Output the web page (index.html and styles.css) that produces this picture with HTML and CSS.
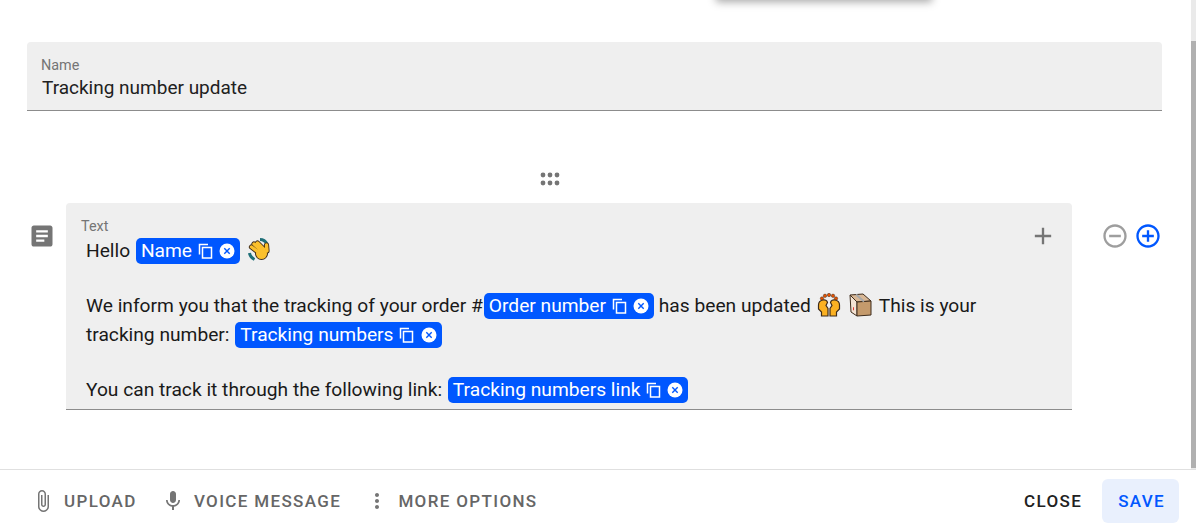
FILE: index.html
```html
<!DOCTYPE html>
<html lang="en">
<head>
  <meta charset="UTF-8" />
  <title>Tracking number update</title>
  <link rel="stylesheet" href="styles.css">
</head>
<body>

<div class="dialog">
  <div class="menu-shadow"></div>

  <div class="content">
    <!-- Name field -->
    <div class="name-field">
      <div class="field-label">Name</div>
      <div class="field-value">Tracking number update</div>
    </div>

    <div class="drag-handle">
      <svg width="20" height="14" viewBox="0 0 20 14"><g fill="#757575"><circle cx="3" cy="3" r="2.400"/><circle cx="10" cy="3" r="2.400"/><circle cx="17" cy="3" r="2.400"/><circle cx="3" cy="11" r="2.400"/><circle cx="10" cy="11" r="2.400"/><circle cx="17" cy="11" r="2.400"/></g></svg>
    </div>

    <!-- Message block -->
    <div class="message-row">
      <svg class="block-icon" width="28" height="28" viewBox="0 0 24 24"><path fill="#757575" d="M19 3H5c-1.100 0-2 .9-2 2v14c0 1.100.9 2 2 2h14c1.100 0 2-.9 2-2V5c0-1.100-.9-2-2-2zm-5 14H7v-2h7v2zm3-4H7v-2h10v2zm0-4H7V7h10v2z"/></svg>

      <div class="text-field">
        <div class="text-label">Text</div>
        <svg class="add-icon" width="28" height="28" viewBox="0 0 24 24"><path fill="#757575" d="M19 13h-6v6h-2v-6H5v-2h6V5h2v6h6v2z"/></svg>
        <div class="text-body">
          <p>Hello <span class="chip">Name
            <svg class="chip-copy" viewBox="0 0 16 16"><path d="M1.500 11.500V1.500H10M4.500 4.500H13.500V15H4.500z"/></svg>
            <svg class="chip-close" viewBox="0 0 16 16"><circle cx="8" cy="8" r="7.500" fill="#fff"/><path d="M5.300 5.300l5.400 5.400M10.700 5.300l-5.400 5.400" stroke="#0057ff" stroke-width="1.400"/></svg>
          </span> <svg class="emoji emoji-wave" viewBox="0 0 24 24">
            <path d="M13 1.500c3 0 5.500 1.500 7 4.500M2.500 15c.5 3 2 5 5 6.500" fill="none" stroke="#1f6f78" stroke-width="3"/>
            <g fill="none" stroke="#3e2c1c" stroke-width="5.200" stroke-linecap="round"><path d="M4.500 9l8 6M7 6l8 7M10.500 5l6 6M19.500 7l.5 6"/></g>
            <circle cx="14.500" cy="15.500" r="6.500" fill="#3e2c1c"/>
            <g fill="none" stroke="#fbc02d" stroke-width="3.400" stroke-linecap="round"><path d="M4.500 9l8 6M7 6l8 7M10.500 5l6 6M19.500 7l.5 6"/></g>
            <circle cx="14.500" cy="15.500" r="5.500" fill="#fbc02d"/>
          </svg></p>
          <p class="gap">We inform you that the tracking of your order #<span class="chip">Order number
            <svg class="chip-copy" viewBox="0 0 16 16"><path d="M1.500 11.500V1.500H10M4.500 4.500H13.500V15H4.500z"/></svg>
            <svg class="chip-close" viewBox="0 0 16 16"><circle cx="8" cy="8" r="7.500" fill="#fff"/><path d="M5.300 5.300l5.400 5.400M10.700 5.300l-5.400 5.400" stroke="#0057ff" stroke-width="1.400"/></svg>
          </span> has been updated <svg class="emoji" viewBox="0 0 24 24">
            <g fill="#e65100" stroke="#3e2c1c" stroke-width=".5"><circle cx="5" cy="5.500" r="1.700"/><circle cx="8" cy="2.800" r="1.700"/><circle cx="12" cy="2" r="1.700"/><circle cx="16" cy="2.800" r="1.700"/><circle cx="19" cy="5.500" r="1.700"/></g>
            <path fill="#fbb122" stroke="#3e2c1c" stroke-width="1.200" d="M6 7c2-.5 4 .5 4.500 2.500L9 12.500l2 3V23H4.500v-4L1.500 16v-4c0-3 1.500-4.500 4.500-5zM18 7c-2-.5-4 .5-4.500 2.500l1.500 3-2 3V23h6.500v-4l3-3v-4c0-3-1.500-4.500-4.500-5z"/>
          </svg> <svg class="emoji emoji-box" viewBox="0 0 24 24">
            <path fill="#d9b896" stroke="#3e2c1c" d="M2 2l13-1 8 7-14 1z"/>
            <path fill="#f3e3d3" stroke="#3e2c1c" d="M2 2l7 7v14l-6-4z"/>
            <path fill="#c49a6c" stroke="#3e2c1c" d="M9 9l14-1v14l-14 1z"/>
            <path d="M8 1.600l8 7" stroke="#a9a9a9" stroke-width="2"/>
            <path d="M5 14l1 .5v3l-1-.5z" fill="#e53935"/>
          </svg> This is your tracking number: <span class="chip">Tracking numbers
            <svg class="chip-copy" viewBox="0 0 16 16"><path d="M1.500 11.500V1.500H10M4.500 4.500H13.500V15H4.500z"/></svg>
            <svg class="chip-close" viewBox="0 0 16 16"><circle cx="8" cy="8" r="7.500" fill="#fff"/><path d="M5.300 5.300l5.400 5.400M10.700 5.300l-5.400 5.400" stroke="#0057ff" stroke-width="1.400"/></svg>
          </span></p>
          <p class="gap">You can track it through the following link: <span class="chip">Tracking numbers link
            <svg class="chip-copy" viewBox="0 0 16 16"><path d="M1.500 11.500V1.500H10M4.500 4.500H13.500V15H4.500z"/></svg>
            <svg class="chip-close" viewBox="0 0 16 16"><circle cx="8" cy="8" r="7.500" fill="#fff"/><path d="M5.300 5.300l5.400 5.400M10.700 5.300l-5.400 5.400" stroke="#0057ff" stroke-width="1.400"/></svg>
          </span></p>
        </div>
      </div>

      <div class="row-actions">
        <svg width="28" height="28" viewBox="0 0 24 24"><path fill="#9e9e9e" d="M7 11v2h10v-2H7zm5-9C6.480 2 2 6.480 2 12s4.480 10 10 10 10-4.480 10-10S17.520 2 12 2zm0 18c-4.410 0-8-3.590-8-8s3.590-8 8-8 8 3.590 8 8-3.590 8-8 8z"/></svg>
        <svg width="28" height="28" viewBox="0 0 24 24"><path fill="#0057ff" d="M13 7h-2v4H7v2h4v4h2v-4h4v-2h-4V7zm-1-5C6.480 2 2 6.480 2 12s4.480 10 10 10 10-4.480 10-10S17.520 2 12 2zm0 18c-4.410 0-8-3.590-8-8s3.590-8 8-8 8 3.590 8 8-3.590 8-8 8z"/></svg>
      </div>
    </div>
  </div>

  <div class="scrollbar"><div class="scrollbar-thumb"></div></div>

  <!-- Footer -->
  <div class="footer">
    <div class="footer-left">
      <button class="btn">
        <svg width="24" height="24" viewBox="0 0 24 24"><path fill="#757575" d="M16.500 6v11.500c0 2.210-1.790 4-4 4s-4-1.790-4-4V5c0-1.380 1.120-2.500 2.500-2.500s2.500 1.120 2.500 2.500v10.500c0 .55-.45 1-1 1s-1-.45-1-1V6H10v9.500c0 1.380 1.120 2.500 2.500 2.500s2.500-1.120 2.500-2.500V5c0-2.210-1.790-4-4-4S7 2.790 7 5v12.500c0 3.040 2.460 5.500 5.500 5.500s5.500-2.460 5.500-5.500V6h-1.500z"/></svg>
        Upload
      </button>
      <button class="btn">
        <svg width="24" height="24" viewBox="0 0 24 24"><path fill="#757575" d="M12 14c1.660 0 2.990-1.340 2.990-3L15 5c0-1.660-1.340-3-3-3S9 3.340 9 5v6c0 1.660 1.340 3 3 3zm5.300-3c0 3-2.540 5.100-5.300 5.100S6.700 14 6.700 11H5c0 3.410 2.720 6.230 6 6.720V21h2v-3.280c3.280-.48 6-3.300 6-6.720h-1.700z"/></svg>
        Voice message
      </button>
      <button class="btn">
        <svg width="24" height="24" viewBox="0 0 24 24"><path fill="#757575" d="M12 8c1.100 0 2-.9 2-2s-.9-2-2-2-2 .9-2 2 .9 2 2 2zm0 2c-1.100 0-2 .9-2 2s.9 2 2 2 2-.9 2-2-.9-2-2-2zm0 6c-1.100 0-2 .9-2 2s.9 2 2 2 2-.9 2-2-.9-2-2-2z"/></svg>
        More options
      </button>
    </div>
    <div class="footer-right">
      <button class="btn btn-close">Close</button>
      <button class="btn btn-save">Save</button>
    </div>
  </div>
</div>

</body>
</html>
```

FILE: styles.css
```css
* { box-sizing: border-box; }

body, html {
  margin: 0;
  padding: 0;
  height: 100%;
  overflow: hidden;
  background: white;
  font-family: Roboto, sans-serif;
}

.dialog {
  position: relative;
  display: flex;
  flex-direction: column;
  height: 532px;
}

.menu-shadow {
  position: absolute;
  top: -20px;
  left: 716px;
  width: 216px;
  height: 20px;
  background: white;
  box-shadow: 0 2px 8px 0 rgba(0,0,0,0.35);
}

.content {
  flex: 1;
  padding: 42px 34px 0 27px;
}

.name-field {
  height: 69px;
  padding: 15px 14px 0 15px;
  background-color: #efefef;
  border-bottom: 1px solid #8c8c8c;
  border-radius: 4px 4px 0 0;
}

.field-label {
  margin-left: -1px;
  font-size: 14.400px;
  line-height: 18px;
  color: #757575;
}

.field-value {
  font-size: 19px;
  line-height: 26px;
  color: #212121;
}

.drag-handle {
  display: flex;
  justify-content: center;
  height: 92px;
  padding-top: 61px;
  padding-right: 89px;
}

.message-row {
  display: flex;
  align-items: flex-start;
}

.block-icon {
  flex: none;
  margin: 19px 10px 0 1px;
}

.text-field {
  position: relative;
  width: 1006px;
  height: 207px;
  padding: 15px 15px 0;
  background-color: #efefef;
  border-bottom: 1px solid #8c8c8c;
  border-radius: 4px 4px 0 0;
}

.text-label {
  font-size: 14.400px;
  line-height: 17px;
  color: #757575;
}

.add-icon {
  position: absolute;
  top: 19px;
  right: 15px;
}

.text-body {
  padding: 1px 0 0 5px;
  width: 915px;
  font-size: 19.200px;
  line-height: 29px;
  color: #1a1a1a;
}

.text-body p { margin: 0; }
.text-body .gap { margin-top: 26px; }

.chip {
  display: inline-flex;
  align-items: center;
  gap: 5.500px;
  height: 26px;
  margin-left: 1px;
  padding: 0 5px;
  background-color: #0057ff;
  color: white;
  border-radius: 5px;
  line-height: 26px;
}

.chip-copy {
  width: 16px;
  height: 16px;
  fill: none;
  stroke: white;
  stroke-width: 1.500;
}

.chip-close {
  width: 16px;
  height: 16px;
}

.emoji {
  width: 24px;
  height: 24px;
  margin-left: 1px;
  vertical-align: -5px;
}

.emoji-wave { margin-left: 2px; }
.emoji-box { margin: 0 2px 0 3px; }

.row-actions {
  display: flex;
  gap: 5px;
  margin: 19px 0 0 29px;
}

.scrollbar {
  position: absolute;
  top: 0;
  right: 0;
  width: 5px;
  height: 469px;
  background-color: #eaeaea;
}

.scrollbar-thumb {
  height: 427px;
  margin-top: 41px;
  background-color: #b0b0b0;
}

.footer {
  display: flex;
  justify-content: space-between;
  align-items: center;
  height: 63px;
  padding: 0 17px 0 31px;
  border-top: 1px solid #e0e0e0;
}

.footer-left, .footer-right {
  display: flex;
  align-items: center;
}

.footer-left { gap: 24.250px; }
.footer-right { gap: 6px; }

.btn {
  display: flex;
  align-items: center;
  gap: 9px;
  padding: 0;
  height: 44px;
  border: none;
  border-radius: 6px;
  background: none;
  font-family: Roboto, sans-serif;
  font-size: 17px;
  font-weight: 500;
  letter-spacing: 1.350px;
  text-transform: uppercase;
  color: #666;
}

.btn-close {
  padding: 0 14px;
  color: #212121;
}

.btn-save {
  padding: 0 14px 0 16px;
  background-color: #e9f0fd;
  color: #0057ff;
}
```
